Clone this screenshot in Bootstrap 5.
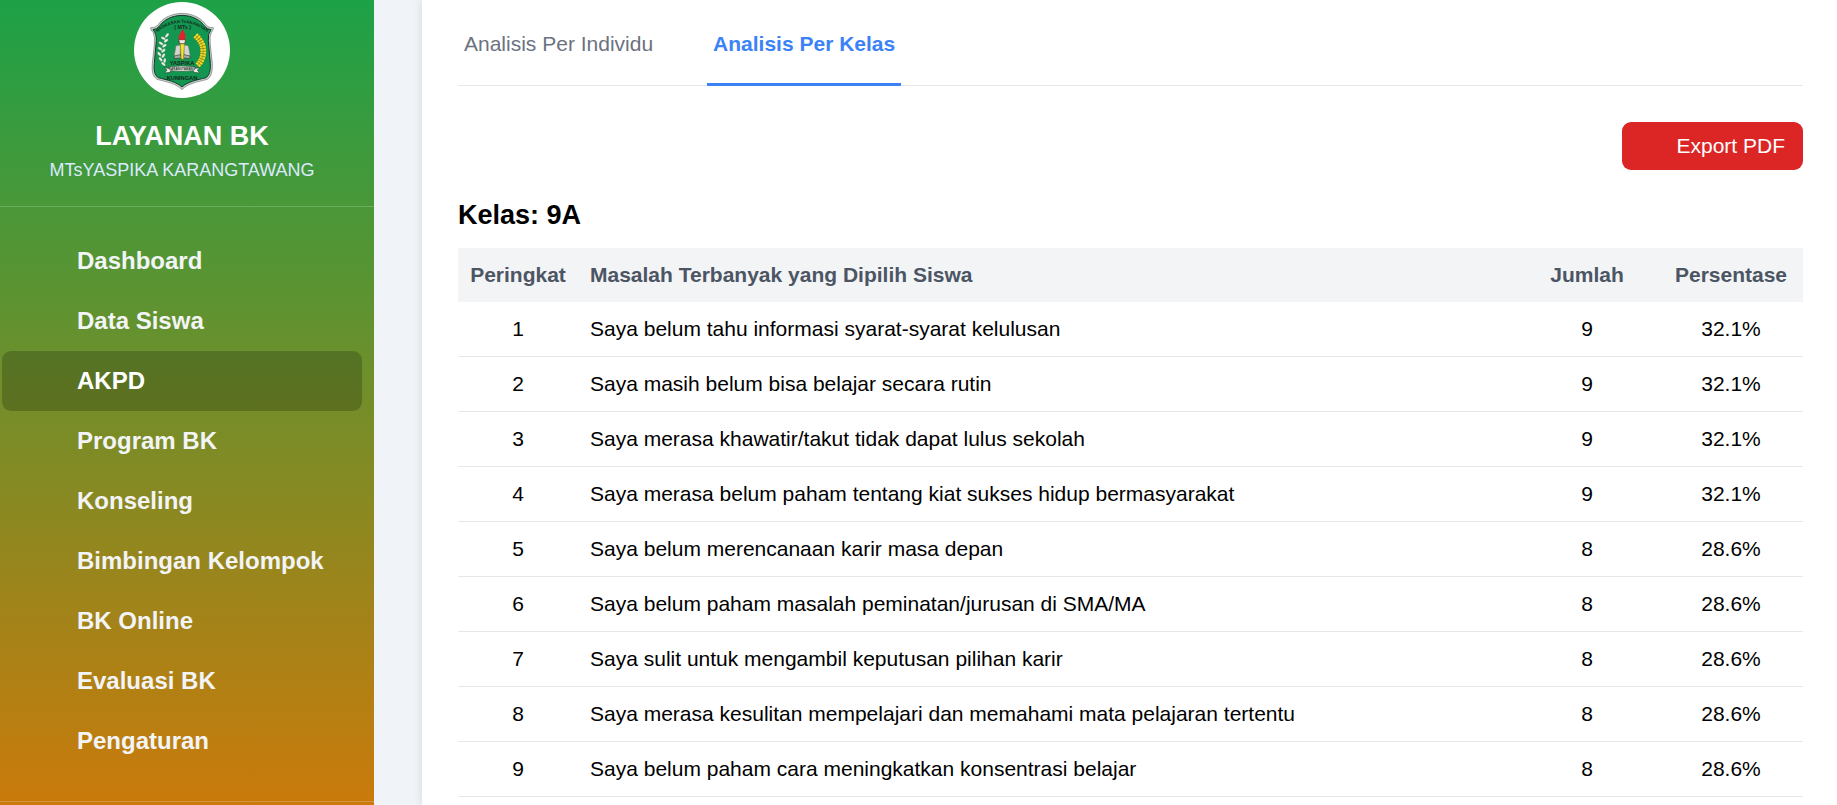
<!DOCTYPE html>
<html lang="id">
<head>
<meta charset="utf-8">
<meta name="viewport" content="width=device-width, initial-scale=1">
<title>Layanan BK - Analisis Per Kelas</title>
<link href="https://cdn.jsdelivr.net/npm/bootstrap@5.3.0/dist/css/bootstrap.min.css" rel="stylesheet">
<style>
  body { font-family: "Liberation Sans", Arial, sans-serif; font-size: 21px; line-height: 30px; color: #000; background: #f0f4f9; }
  .sidebar { flex: 0 0 374px; background: linear-gradient(to bottom, #16a34a -32px, #d97706 870px); }
  .sidebar-brand { padding: 2px 12px 22px 2px; border-bottom: 1px solid rgba(255,255,255,.2); }
  .brand-logo { width: 96px; height: 96px; }
  .brand-title { margin: 17px 0 0; font-size: 27px; line-height: 42px; }
  .brand-sub { font-size: 18px; line-height: 27px; color: #dbeafe; }
  .sidebar-menu { padding: 24px 12px 30px 2px; }
  .sidebar-menu .nav-link { padding: 12px 12px 12px 75px; font-size: 24px; line-height: 36px; color: #f3f4f6; border-radius: 9px; white-space: nowrap; }
  .sidebar-menu .nav-link:hover { color: #fff; }
  .sidebar-menu .nav-link.active { color: #fff; background: rgba(0,0,0,.2); }
  .sidebar-foot { border-top: 1px solid rgba(255,255,255,.2); }
  .content { margin-left: 48px; padding: 0 34px 0 36px; box-shadow: 0 0 9px rgba(0,0,0,.12); min-width: 0; }
  .report-tabs { gap: 48px; border-bottom: 1px solid #e5e7eb; }
  .report-tabs .nav-link { padding: 29px 6px 24px; margin-bottom: -1px; border: 0; border-bottom: 3px solid transparent; border-radius: 0; color: #6b7280; background: none; }
  .report-tabs .nav-link.active { color: #3b82f6; background: none; border-color: #3b82f6; font-weight: 700; }
  .btn-export { margin-top: 36px; padding: 9px 18px 9px 54px; border: 0; border-radius: 9px; font-size: 21px; line-height: 30px; color: #fff; background: #dc2626; }
  .btn-export:hover { color: #fff; background: #b91c1c; }
  .class-title { margin: 24px 0 12px; font-size: 27px; line-height: 42px; }
  .rank-table { --bs-table-bg: transparent; --bs-table-color: #000; table-layout: fixed; margin: 0; color: #000; }
  .rank-table th, .rank-table td { padding: 12px; border: 0; }
  .rank-table thead th { color: #4b5563; background: #f3f4f6; }
  .rank-table tbody td { border-bottom: 1px solid #e5e7eb; }
  .col-rank { width: 120px; }
  .col-num { width: 144px; }
</style>
</head>
<body>
<div class="d-flex min-vh-100">
  <aside class="sidebar d-flex flex-column">
    <div class="sidebar-brand text-center">
      <svg class="brand-logo d-block mx-auto" viewBox="27 6 288 288" role="img" aria-label="Logo MTs Yaspika">
        <circle cx="171" cy="150" r="144" fill="#fff"/>
        <path d="M171 40 C135 41 112 56 98 76 Q90 84 77 83 Q76 90 84 97 Q91 110 88 135 L82 190 Q78 228 96 238 C125 246 153 250 171 269 C189 250 217 246 247 238 Q264 228 262 190 L256 135 Q253 110 259 97 Q266 90 265 83 Q252 84 244 76 C230 56 207 41 171 40Z" fill="#c6cdc9" stroke="#6f7a74" stroke-width="2"/>
        <path d="M171 46 C139 47 116 60 102 80 Q95 88 84 89 Q95 101 94 122 L88 190 Q84 224 100 233 C127 240 154 245 171 261 C188 245 215 240 243 233 Q258 224 256 190 L250 122 Q248 101 258 89 Q247 88 240 80 C226 60 203 47 171 46Z" fill="#129650" stroke="#18382b" stroke-width="3"/>
        <path id="arc" d="M94 98 Q171 39 248 98" fill="none"/>
        <g font-family="Liberation Sans, Arial, sans-serif" font-weight="700" fill="#142a1d" text-anchor="middle">
          <text font-size="13"><textPath href="#arc" startOffset="50%">MADRASAH TsANAWIYAH</textPath></text>
          <text x="173" y="86" font-size="16">( MTs )</text>
          <text x="171" y="196" font-size="17">YASPIKA</text>
        </g>
        <g fill="#e9f3e4" stroke="#35684a" stroke-width="1">
          <ellipse cx="126" cy="106" rx="8" ry="4" transform="rotate(-50 126 106)"/><ellipse cx="115" cy="115" rx="8" ry="4" transform="rotate(25 115 115)"/>
          <ellipse cx="123" cy="122" rx="8" ry="4" transform="rotate(-35 123 122)"/><ellipse cx="108" cy="130" rx="8" ry="4" transform="rotate(30 108 130)"/>
          <ellipse cx="118" cy="137" rx="8" ry="4" transform="rotate(-35 118 137)"/><ellipse cx="105" cy="146" rx="8" ry="4" transform="rotate(35 105 146)"/>
          <ellipse cx="115" cy="152" rx="8" ry="4" transform="rotate(-40 115 152)"/><ellipse cx="103" cy="162" rx="8" ry="4" transform="rotate(45 103 162)"/>
          <ellipse cx="115" cy="167" rx="8" ry="4" transform="rotate(-55 115 167)"/><ellipse cx="107" cy="178" rx="8" ry="4" transform="rotate(50 107 178)"/>
          <ellipse cx="119" cy="182" rx="8" ry="4" transform="rotate(-80 119 182)"/><ellipse cx="115" cy="192" rx="8" ry="4" transform="rotate(40 115 192)"/>
        </g>
        <path d="M211 106 Q242 132 233 170 Q229 184 218 196" fill="none" stroke="#7d7720" stroke-width="17"/>
        <path d="M211 106 Q242 132 233 170 Q229 184 218 196" fill="none" stroke="#f1dd24" stroke-width="17" stroke-dasharray="6 2"/>
        <path d="M211 106 Q242 132 233 170 Q229 184 218 196" fill="none" stroke="#9b8d20" stroke-width="2"/>
        <path d="M153 137 L166 135 L166 168 L147 170Z M177 135 L190 137 L196 170 L177 168Z" fill="#d6d3d2" stroke="#69806b" stroke-width="2"/>
        <path d="M147 168 L166 164 L171 179 L177 164 L196 168 L194 176 L177 174 L171 180 L166 174 L148 176Z" fill="#a9aba4" stroke="#27412b" stroke-width="2"/>
        <path d="M166 130 L178 130 L175 178 L169 178Z" fill="#f6e22c" stroke="#7c711e"/>
        <path d="M161 119 L182 119 L179 131 L164 131Z" fill="#efe9df" stroke="#53211d" stroke-width="2"/>
        <path d="M163 119 Q158 108 167 98 Q172 92 171 86 Q184 100 180 119Z" fill="#e3202b"/>
        <path d="M118 203 L132 205 L132 200 Q171 196 210 200 L210 205 L225 203 L217 210 L224 219 L206 217 L206 212 Q171 216 136 212 L136 217 L119 219 L126 210Z" fill="#eef1e8" stroke="#314b36" stroke-width="2"/>
        <g font-family="Liberation Sans, Arial, sans-serif" font-weight="700" fill="#17251c" text-anchor="middle">
          <text x="171" y="211" font-size="9">KARANGTAWANG</text>
          <text x="171" y="239" font-size="17">KUNINGAN</text>
        </g>
      </svg>
      <h1 class="brand-title fw-bold text-white">LAYANAN BK</h1>
      <div class="brand-sub">MTsYASPIKA KARANGTAWANG</div>
    </div>
    <nav class="sidebar-menu nav flex-column fw-bold" aria-label="Menu utama">
      <a class="nav-link" href="#">Dashboard</a>
      <a class="nav-link" href="#">Data Siswa</a>
      <a class="nav-link active" href="#" aria-current="page">AKPD</a>
      <a class="nav-link" href="#">Program BK</a>
      <a class="nav-link" href="#">Konseling</a>
      <a class="nav-link" href="#">Bimbingan Kelompok</a>
      <a class="nav-link" href="#">BK Online</a>
      <a class="nav-link" href="#">Evaluasi BK</a>
      <a class="nav-link" href="#">Pengaturan</a>
    </nav>
    <div class="sidebar-foot"></div>
  </aside>

  <main class="content flex-grow-1 bg-white">
    <div class="report-tabs nav" role="tablist">
      <button class="nav-link" type="button" role="tab" aria-selected="false">Analisis Per Individu</button>
      <button class="nav-link active" type="button" role="tab" aria-selected="true">Analisis Per Kelas</button>
    </div>
    <div class="d-flex justify-content-end">
      <button class="btn btn-export" type="button">Export PDF</button>
    </div>
    <h2 class="class-title fw-bold">Kelas: 9A</h2>
    <table class="table rank-table">
      <colgroup><col class="col-rank"><col><col class="col-num"><col class="col-num"></colgroup>
      <thead>
        <tr><th class="text-center" scope="col">Peringkat</th><th scope="col">Masalah Terbanyak yang Dipilih Siswa</th><th class="text-center" scope="col">Jumlah</th><th class="text-center" scope="col">Persentase</th></tr>
      </thead>
      <tbody>
        <tr><td class="text-center">1</td><td>Saya belum tahu informasi syarat-syarat kelulusan</td><td class="text-center">9</td><td class="text-center">32.1%</td></tr>
        <tr><td class="text-center">2</td><td>Saya masih belum bisa belajar secara rutin</td><td class="text-center">9</td><td class="text-center">32.1%</td></tr>
        <tr><td class="text-center">3</td><td>Saya merasa khawatir/takut tidak dapat lulus sekolah</td><td class="text-center">9</td><td class="text-center">32.1%</td></tr>
        <tr><td class="text-center">4</td><td>Saya merasa belum paham tentang kiat sukses hidup bermasyarakat</td><td class="text-center">9</td><td class="text-center">32.1%</td></tr>
        <tr><td class="text-center">5</td><td>Saya belum merencanaan karir masa depan</td><td class="text-center">8</td><td class="text-center">28.6%</td></tr>
        <tr><td class="text-center">6</td><td>Saya belum paham masalah peminatan/jurusan di SMA/MA</td><td class="text-center">8</td><td class="text-center">28.6%</td></tr>
        <tr><td class="text-center">7</td><td>Saya sulit untuk mengambil keputusan pilihan karir</td><td class="text-center">8</td><td class="text-center">28.6%</td></tr>
        <tr><td class="text-center">8</td><td>Saya merasa kesulitan mempelajari dan memahami mata pelajaran tertentu</td><td class="text-center">8</td><td class="text-center">28.6%</td></tr>
        <tr><td class="text-center">9</td><td>Saya belum paham cara meningkatkan konsentrasi belajar</td><td class="text-center">8</td><td class="text-center">28.6%</td></tr>
      </tbody>
    </table>
  </main>
</div>
<script src="https://cdn.jsdelivr.net/npm/bootstrap@5.3.0/dist/js/bootstrap.bundle.min.js"></script>
</body>
</html>
